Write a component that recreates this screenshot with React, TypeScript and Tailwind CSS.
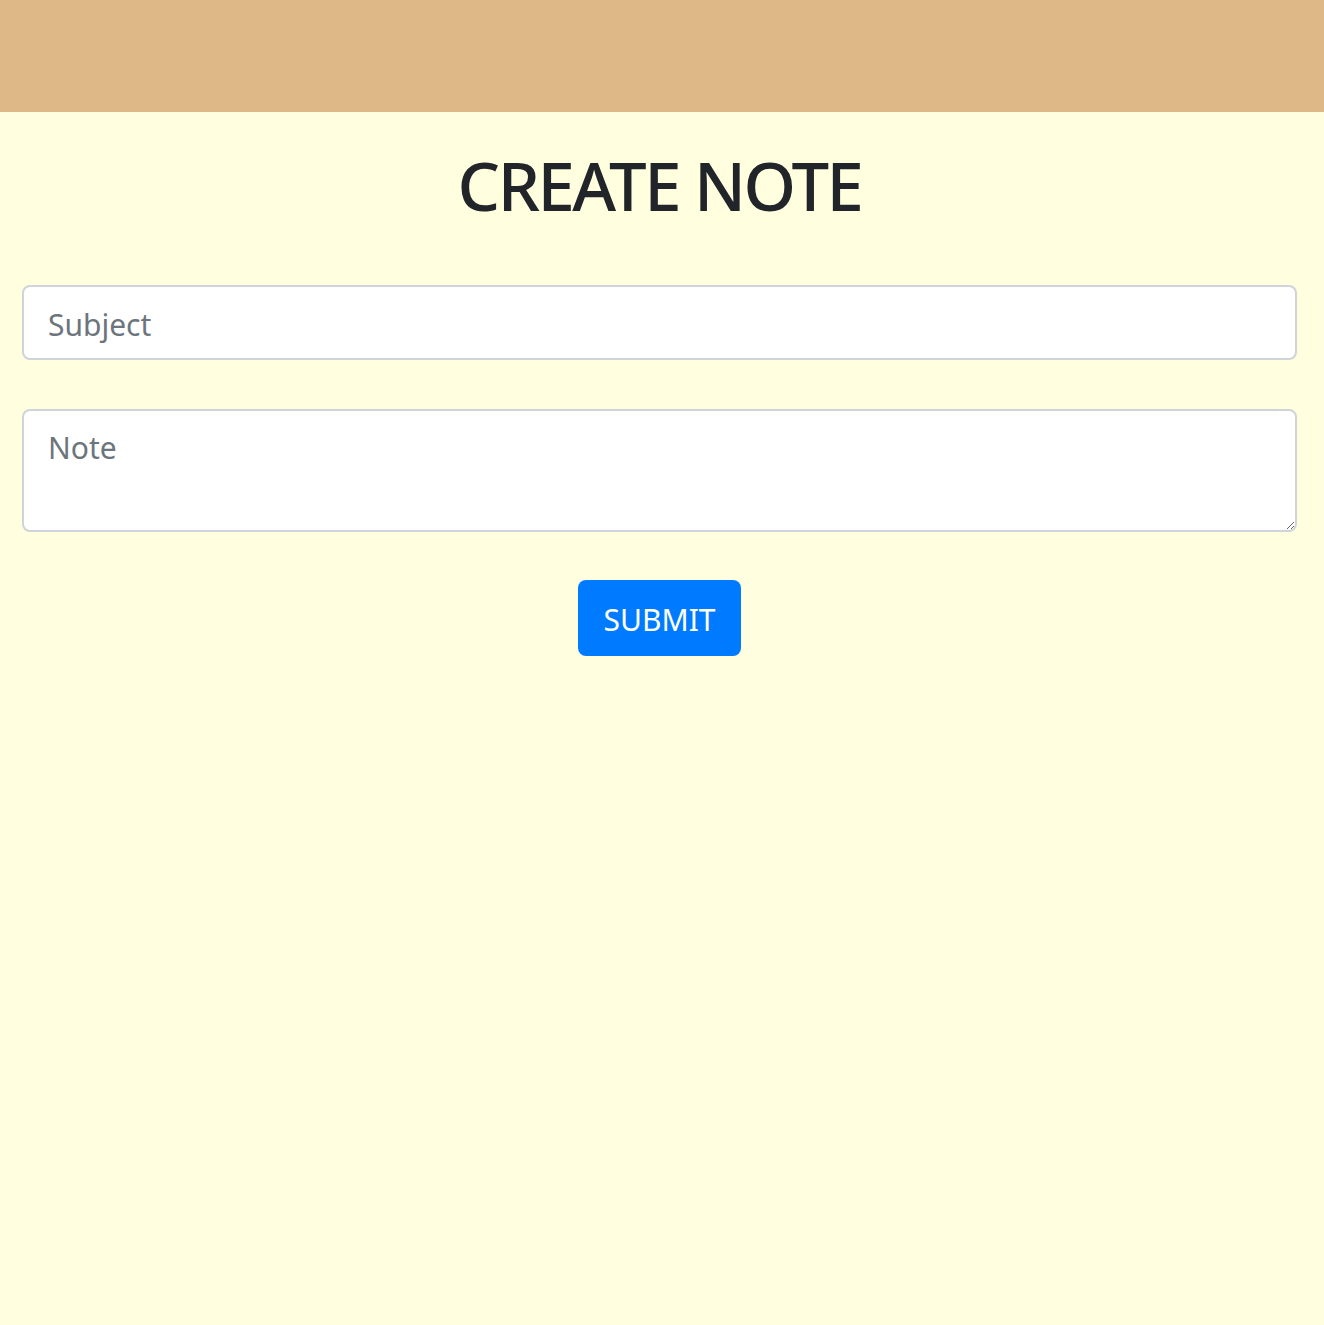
export default function App() {
  return (
    <div className="min-h-[1325px] bg-[#ffffe0] font-['Noto_Sans',sans-serif]">
      <div className="h-[112px] bg-[#deb887]" />
      <div className="pl-[22px] pr-[27px]">
        <h1 className="mt-[33px] text-center text-[67px] leading-[80px] tracking-[-2.5px] font-medium text-[#212529]">
          CREATE NOTE
        </h1>
        <form className="mt-[60px] flex flex-col">
          <input
            type="text"
            placeholder="Subject"
            className="h-[75px] w-full rounded-[8px] border-2 border-[#ced4da] bg-white px-[24px] pt-[3px] text-[30px] text-[#495057] placeholder:text-[#6c757d] outline-none"
          />
          <textarea
            placeholder="Note"
            rows={2}
            className="mt-[49px] h-[123px] w-full rounded-[8px] border-2 border-[#ced4da] bg-white px-[24px] py-[14px] text-[30px] leading-[45px] text-[#495057] placeholder:text-[#6c757d] outline-none"
          />
          <div className="mt-[48px] flex justify-center">
            <button
              type="submit"
              className="h-[76px] rounded-[8px] bg-[#007bff] px-[26px] pt-[2px] text-[30px] text-white"
            >
              SUBMIT
            </button>
          </div>
        </form>
      </div>
    </div>
  );
}
